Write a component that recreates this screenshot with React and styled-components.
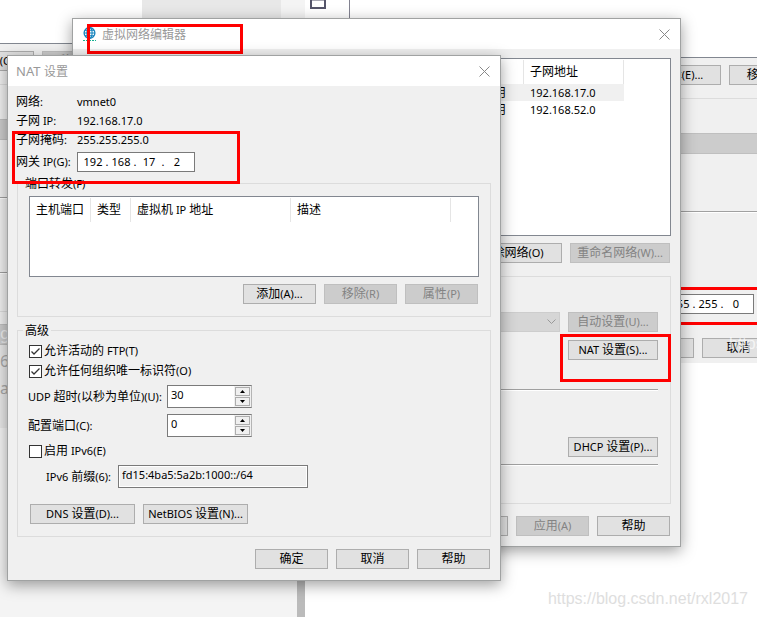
import React from "react";
import styled, { createGlobalStyle, css } from "styled-components";

const GlobalStyle = createGlobalStyle`
  * {
    box-sizing: border-box;
  }
  body {
    margin: 0;
    background: #fff;
    color: #000;
    font-family: "Noto Sans", "Noto Sans CJK SC", sans-serif;
    font-size: 11px;
    line-height: 18px;
  }
  button,
  input,
  select {
    font: inherit;
    color: inherit;
    margin: 0;
  }
`;

const Desktop = styled.main`
  position: relative;
  min-height: 100vh;
  overflow: hidden;
  white-space: nowrap;
`;

const Cjk = styled.span`
  font-family: "Noto Sans CJK SC", sans-serif;
  font-size: 12px;
  line-height: 12px;
`;

const Window = styled.section`
  position: absolute;
  background: #f0f0f0;
`;

const Dialog = styled(Window)`
  border: 1px solid #a0a2a2;
  box-shadow: 0 4px 14px rgba(0, 0, 0, 0.38);
`;

const NatDialog = styled(Dialog)`
  top: 55px;
  left: 7px;
  right: 256px;
`;

const EditorDialog = styled(Dialog)`
  top: 18px;
  left: 72px;
  right: 76px;
`;

const TitleBar = styled.header`
  display: flex;
  align-items: center;
  gap: 6px;
  height: 30px;
  padding: 0 10px 0 ${(props) => (props.$icon ? "10px" : "8px")};
  background: #fff;
  h2 {
    flex: 1;
    margin: 0;
    font-size: 13px;
    font-weight: 400;
    color: #999;
  }
`;

const CloseButton = styled.button`
  display: flex;
  padding: 0;
  border: 0;
  background: none;
`;

const Button = styled.button`
  width: ${(props) => props.$width || 73}px;
  height: 20px;
  flex: none;
  padding: 0;
  border: 1px solid #adadad;
  background: #e1e1e1;
  line-height: 18px;
  text-align: center;
  white-space: nowrap;
  &:disabled {
    border-color: #bfbfbf;
    background: #ccc;
    color: #838383;
  }
`;

const ButtonRow = styled.div`
  display: flex;
  justify-content: ${(props) => (props.$start ? "flex-start" : "flex-end")};
  gap: 8px;
`;

const Group = styled.fieldset`
  min-width: 0;
  margin: 0;
  border: 1px solid #dcdcdc;
  padding: 0 11px 12px;
  legend {
    height: 18px;
    margin-left: -6px;
    padding: 1px 2px 0;
  }
  > ${ButtonRow} {
    margin-right: 1px;
  }
`;

const NatBody = styled.div`
  padding: 7px 9px 11px;
  ${Group} + ${Group} {
    margin-top: 4px;
  }
  > ${ButtonRow} {
    margin: 12px 1px 0 0;
  }
`;

const Facts = styled.dl`
  display: grid;
  grid-template-columns: 61px 1fr;
  grid-auto-rows: 19px;
  margin: 0 0 2px -1px;
  dt,
  dd {
    margin: 0;
  }
`;

const GatewayRow = styled.div`
  display: grid;
  grid-template-columns: 61px 1fr;
  align-items: center;
  margin: 2px 0 2px -1px;
`;

const IpBox = styled.div`
  display: flex;
  align-items: center;
  width: 118px;
  height: 20px;
  padding: 0 1px 0 3px;
  border: 1px solid #7a7a7a;
  background: #fff;
  input {
    width: 24px;
    height: 18px;
    padding: 0;
    border: 0;
    background: none;
    text-align: center;
  }
  span {
    width: 4px;
    text-align: center;
  }
`;

const PortList = styled.div`
  height: 81px;
  margin: 4px 0 7px;
  padding-top: 1px;
  border: 1px solid #828790;
  background: #fff;
`;

const listCell = css`
  padding: 0 0 0 6px;
  font-weight: 400;
  text-align: left;
`;

const Table = styled.table`
  width: 100%;
  table-layout: fixed;
  border-collapse: separate;
  border-spacing: 0;
  th {
    ${listCell}
    height: 24px;
    border-right: 1px solid #e5e5e5;
  }
  th:last-child {
    border-right: 0;
  }
  td {
    ${listCell}
    height: 17px;
    line-height: 17px;
  }
  tr.selected td:not(:last-child) {
    background: #f0f0f0;
  }
`;

const CheckRow = styled.label`
  display: flex;
  align-items: center;
  gap: 2px;
  height: 20px;
  input {
    position: absolute;
    opacity: 0;
    width: 13px;
    height: 13px;
  }
  svg {
    flex: none;
  }
  path {
    visibility: hidden;
  }
  input:checked + svg path {
    visibility: visible;
  }
`;

const Advanced = styled.div`
  display: flex;
  flex-direction: column;
  gap: 4px;
  padding-top: 2px;
  > ${ButtonRow} {
    margin: 12px 0 0 1px;
  }
`;

const FieldRow = styled.div`
  display: grid;
  grid-template-columns: ${(props) => props.$label || 139}px auto;
  justify-content: start;
  align-items: center;
  height: 23px;
  margin-left: ${(props) => props.$indent || -1}px;
  & + & {
    margin-top: 2px;
  }
`;

const SpinBox = styled.div`
  display: flex;
  width: 85px;
  height: 23px;
  border: 1px solid #7a7a7a;
  border-right-color: #b4b4b4;
  background: #fff;
  input {
    flex: 1;
    min-width: 0;
    height: 18px;
    padding: 0 3px;
    border: 0;
    background: none;
  }
`;

const SpinButtons = styled.div`
  display: flex;
  flex-direction: column;
  justify-content: space-between;
  width: 17px;
  padding: 1px;
  background: #f0f0f0;
  button {
    display: flex;
    align-items: center;
    justify-content: center;
    height: 9px;
    padding: 0;
    border: 1px solid #adadad;
    background: #f0f0f0;
  }
`;

const PrefixInput = styled.input`
  width: 190px;
  height: 23px;
  padding: 0 3px 4px;
  border: 1px solid #7a7a7a;
  background: #f0f0f0;
  box-shadow: inset 0 0 0 1px #fff;
`;

const EditorBody = styled.div`
  padding: 9px 10px 10px;
  > ${ButtonRow} {
    margin: 7px 0 13px;
  }
  > ${ButtonRow}:last-child {
    margin: 12px 0 0;
  }
`;

const NetworkList = styled.div`
  height: 178px;
  margin-right: -1px;
  padding-top: 1px;
  border: 1px solid #828790;
  background: #fff;
`;

const SettingsGroup = styled.div`
  display: flex;
  flex-direction: column;
  margin-right: -1px;
  padding: 35px 12px 37px;
  border: 1px solid #dcdcdc;
`;

const Combo = styled.div`
  position: relative;
  flex: 1;
  select {
    display: block;
    width: 100%;
    height: 20px;
    border: 1px solid #bfbfbf;
    background: #ccc;
    appearance: none;
  }
  svg {
    position: absolute;
    right: 4px;
    top: 7px;
  }
`;

const Divider = styled.hr`
  width: 100%;
  height: 2px;
  margin: ${(props) => props.$space || 0}px 0 0;
  border: 0;
  border-top: 1px solid #a0a0a0;
  border-bottom: 1px solid #fff;
`;

const NatButtonRow = styled(ButtonRow)`
  margin-top: 8px;
`;

const DhcpButtonRow = styled(ButtonRow)`
  margin-top: 46px;
`;

const Mark = styled.div`
  position: absolute;
  top: ${(props) => props.$top}px;
  left: ${(props) => props.$left}px;
  width: ${(props) => props.$width}px;
  height: ${(props) => props.$height}px;
  border: 3px solid #f00;
  pointer-events: none;
`;

const Toolbar = styled.div`
  position: absolute;
  top: 0;
  left: 142px;
  display: flex;
  width: 208px;
  height: 43px;
  border-right: 1px solid #828290;
  background: linear-gradient(to right, #e8e8e8 139px, #f4f4f4 139px, #f4f4f4 163px, #fff 163px);
  svg {
    margin-left: 168px;
  }
`;

const SidePane = styled.div`
  position: absolute;
  top: 427px;
  bottom: 0;
  left: 0;
  width: 305px;
  border-right: 8px solid #bbb;
  background: #f4f4f4;
`;

const LeftWindow = styled(Window)`
  top: 43px;
  left: -36px;
  width: 178px;
  padding-top: 7px;
  border-top: 1px solid #828790;
`;

const RightWindow = styled(Window)`
  top: 57px;
  left: 600px;
  right: 0;
  padding: 7px 0 5px;
  border-top: 1px solid #828790;
  overflow: hidden;
  ${IpBox} {
    margin: 81px 0 24px 36px;
  }
`;

const ToolRow = styled(ButtonRow)`
  padding-left: 40px;
`;

const ActionRow = styled(ButtonRow)`
  padding-left: 21px;
`;

const Bar = styled.div`
  height: 21px;
  margin-top: ${(props) => props.$space}px;
  padding-left: 36px;
  border: 1px solid #bfbfbf;
  border-width: 1px 0;
  background: #ccc;
  color: #eee;
  font-size: 16px;
  line-height: 16px;
`;

const Line = styled.div`
  height: 1px;
  margin-top: ${(props) => props.$space}px;
  background: #dcdcdc;
`;

const Faded = styled.div`
  height: 83px;
  padding: 3px 0 0 36px;
  background: #e9e9e9;
  color: #aaa;
  font-size: 16px;
  line-height: 27px;
`;

const Watermark = styled.div`
  position: absolute;
  right: 9px;
  bottom: 6px;
  color: #dedede;
  font-family: "Liberation Sans", sans-serif;
  font-size: 16px;
  line-height: 24px;
`;

const FaintMark = styled(Watermark)`
  right: auto;
  bottom: auto;
  left: 129px;
  top: 274px;
  color: rgba(255, 255, 255, 0.7);
`;

// han characters are set one pixel larger than the latin text beside them
const Text = ({ children }) =>
  children
    .split(/([\u4e00-\u9fff]+)/)
    .filter(Boolean)
    .map((part, i) =>
      /[\u4e00-\u9fff]/.test(part) ? <Cjk key={i}>{part}</Cjk> : part
    );

const Close = () => (
  <CloseButton type="button" aria-label="关闭">
    <svg width="11" height="11" viewBox="0 0 11 11">
      <path d="M0.5 0.5L10.5 10.5M10.5 0.5L0.5 10.5" stroke="#888" fill="none" />
    </svg>
  </CloseButton>
);

const Globe = () => (
  <svg width="13" height="15" viewBox="0 0 13 15" fill="none">
    <circle cx="6.5" cy="6" r="5.4" fill="#fff" stroke="#1683bd" strokeWidth="1.3" />
    <ellipse cx="6.5" cy="6" rx="2.6" ry="5.4" stroke="#1683bd" strokeWidth="1.1" />
    <path d="M6.5 0.5v11M1 6h11M2 3.2h9M2 8.8h9" stroke="#1683bd" strokeWidth="1.1" />
    <path d="M0 13.5h13" stroke="#17b191" strokeDasharray="2 1" />
  </svg>
);

const Check = ({ label, checked }) => (
  <CheckRow>
    <input type="checkbox" defaultChecked={checked} />
    <svg width="13" height="13" viewBox="0 0 13 13" fill="none">
      <rect x="0.5" y="0.5" width="12" height="12" fill="#fff" stroke="#333" />
      <path d="M2.5 6.5L5 9L10.5 3.5" stroke="#333" strokeWidth="1.3" />
    </svg>
    <span>
      <Text>{label}</Text>
    </span>
  </CheckRow>
);

const IpField = ({ label, octets }) => (
  <IpBox role="group" aria-label={label}>
    {octets.map((octet, i) => (
      <React.Fragment key={i}>
        {i > 0 && <span>.</span>}
        <input defaultValue={octet} aria-label={`${label} ${i + 1}`} />
      </React.Fragment>
    ))}
  </IpBox>
);

const Spin = ({ id, label, value }) => (
  <FieldRow>
    <label htmlFor={id}>
      <Text>{label}</Text>
    </label>
    <SpinBox>
      <input id={id} defaultValue={value} />
      <SpinButtons>
        <button type="button" aria-label="增加">
          <svg width="5" height="3" viewBox="0 0 5 3">
            <path d="M0 3L2.5 0L5 3z" />
          </svg>
        </button>
        <button type="button" aria-label="减少">
          <svg width="5" height="3" viewBox="0 0 5 3">
            <path d="M0 0L2.5 3L5 0z" />
          </svg>
        </button>
      </SpinButtons>
    </SpinBox>
  </FieldRow>
);

const Btn = ({ children, width, disabled }) => (
  <Button type="button" $width={width} disabled={disabled}>
    <Text>{children}</Text>
  </Button>
);

const facts = [
  ["网络:", "vmnet0"],
  ["子网 IP:", "192.168.17.0"],
  ["子网掩码:", "255.255.255.0"],
];

const networks = [
  { dhcp: "已启用", subnet: "192.168.17.0", selected: true },
  { dhcp: "已启用", subnet: "192.168.52.0" },
];

const Background = () => (
  <>
    <Toolbar>
      <svg width="16" height="9" viewBox="0 0 16 9">
        <path d="M1 0V8H15V0" fill="none" stroke="#55556a" strokeWidth="2" />
        <path d="M1 0H15" stroke="#55556a" strokeWidth="1" />
      </svg>
    </Toolbar>
    <SidePane />
    <LeftWindow>
      <ButtonRow $start>
        <Btn width={70}>添加(C)...</Btn>
        <Btn disabled>移除(R)</Btn>
      </ButtonRow>
      <Line $space={13} />
      <Bar $space={34} />
      <Divider $space={57} />
      <Divider $space={73} />
      <Line $space={37} />
      <Bar $space={12}>g</Bar>
      <Faded>
        <div>6</div>
        <div>ad</div>
      </Faded>
    </LeftWindow>
    <RightWindow>
      <ToolRow $start>
        <Btn width={81}>编辑(E)...</Btn>
        <Btn>移除(R)</Btn>
      </ToolRow>
      <Line $space={13} />
      <Bar $space={34} />
      <Divider $space={57} />
      <IpField label="子网掩码" octets={["255", "255", "255", "0"]} />
      <ActionRow $start>
        <Btn>确定</Btn>
        <Btn>取消</Btn>
      </ActionRow>
      <Mark $top={229} $left={40} $width={140} $height={38} />
      <FaintMark>https:</FaintMark>
    </RightWindow>
  </>
);

const Editor = () => (
  <EditorDialog aria-label="虚拟网络编辑器">
    <TitleBar $icon>
      <Globe />
      <h2>
        <Text>虚拟网络编辑器</Text>
      </h2>
      <Close />
    </TitleBar>
    <EditorBody>
      <NetworkList>
        <Table>
          <colgroup>
            <col />
            <col width="60" />
            <col width="100" />
            <col width="46" />
          </colgroup>
          <thead>
            <tr>
              <th />
              <th />
              <th>
                <Text>子网地址</Text>
              </th>
              <th />
            </tr>
          </thead>
          <tbody>
            {networks.map((net) => (
              <tr key={net.subnet} className={net.selected ? "selected" : ""}>
                <td />
                <td>
                  <Text>{net.dhcp}</Text>
                </td>
                <td>{net.subnet}</td>
                <td />
              </tr>
            ))}
          </tbody>
        </Table>
      </NetworkList>
      <ButtonRow>
        <Btn width={100}>移除网络(O)</Btn>
        <Btn width={100} disabled>
          重命名网络(W)...
        </Btn>
      </ButtonRow>
      <SettingsGroup>
        <ButtonRow>
          <Combo>
            <select disabled aria-label="桥接到" />
            <svg width="9" height="6" viewBox="0 0 9 6">
              <path d="M0.5 0.5L4.5 4.5L8.5 0.5" fill="none" stroke="#999" />
            </svg>
          </Combo>
          <Btn width={90} disabled>
            自动设置(U)...
          </Btn>
        </ButtonRow>
        <NatButtonRow>
          <Btn width={90}>NAT 设置(S)...</Btn>
        </NatButtonRow>
        <Divider $space={29} />
        <DhcpButtonRow>
          <Btn width={90}>DHCP 设置(P)...</Btn>
        </DhcpButtonRow>
        <Divider $space={7} />
      </SettingsGroup>
      <ButtonRow>
        <Btn>取消</Btn>
        <Btn disabled>应用(A)</Btn>
        <Btn>帮助</Btn>
      </ButtonRow>
    </EditorBody>
    <Mark $top={5} $left={14} $width={156} $height={30} />
    <Mark $top={315} $left={487} $width={111} $height={48} />
  </EditorDialog>
);

const NatSettings = () => (
  <NatDialog aria-label="NAT 设置">
    <TitleBar>
      <h2>
        <Text>NAT 设置</Text>
      </h2>
      <Close />
    </TitleBar>
    <NatBody>
      <Facts>
        {facts.map(([name, value]) => (
          <React.Fragment key={name}>
            <dt>
              <Text>{name}</Text>
            </dt>
            <dd>{value}</dd>
          </React.Fragment>
        ))}
      </Facts>
      <GatewayRow>
        <span>
          <Text>网关 IP(G):</Text>
        </span>
        <IpField label="网关 IP" octets={["192", "168", "17", "2"]} />
      </GatewayRow>
      <Group>
        <legend>
          <Text>端口转发(F)</Text>
        </legend>
        <PortList>
          <Table>
            <colgroup>
              <col width="61" />
              <col width="40" />
              <col width="160" />
              <col width="160" />
              <col />
            </colgroup>
            <thead>
              <tr>
                {["主机端口", "类型", "虚拟机 IP 地址", "描述", ""].map((name) => (
                  <th key={name}>
                    <Text>{name}</Text>
                  </th>
                ))}
              </tr>
            </thead>
          </Table>
        </PortList>
        <ButtonRow>
          <Btn>添加(A)...</Btn>
          <Btn disabled>移除(R)</Btn>
          <Btn disabled>属性(P)</Btn>
        </ButtonRow>
      </Group>
      <Group>
        <legend>
          <Text>高级</Text>
        </legend>
        <Advanced>
          <div>
            <Check label="允许活动的 FTP(T)" checked />
            <Check label="允许任何组织唯一标识符(O)" checked />
          </div>
          <Spin id="udp" label="UDP 超时(以秒为单位)(U):" value="30" />
          <Spin id="port" label="配置端口(C):" value="0" />
          <Check label="启用 IPv6(E)" />
          <FieldRow $label={72} $indent={17}>
            <label htmlFor="prefix">
              <Text>IPv6 前缀(6):</Text>
            </label>
            <PrefixInput id="prefix" readOnly value="fd15:4ba5:5a2b:1000::/64" />
          </FieldRow>
          <ButtonRow $start>
            <Btn width={105}>DNS 设置(D)...</Btn>
            <Btn width={105}>NetBIOS 设置(N)...</Btn>
          </ButtonRow>
        </Advanced>
      </Group>
      <ButtonRow>
        <Btn>确定</Btn>
        <Btn>取消</Btn>
        <Btn>帮助</Btn>
      </ButtonRow>
    </NatBody>
    <Mark $top={75} $left={4} $width={228} $height={53} />
  </NatDialog>
);

const App = () => {
  return (
    <Desktop>
      <GlobalStyle />
      <Background />
      <Editor />
      <NatSettings />
      <Watermark>https://blog.csdn.net/rxl2017</Watermark>
    </Desktop>
  );
};

export default App;
